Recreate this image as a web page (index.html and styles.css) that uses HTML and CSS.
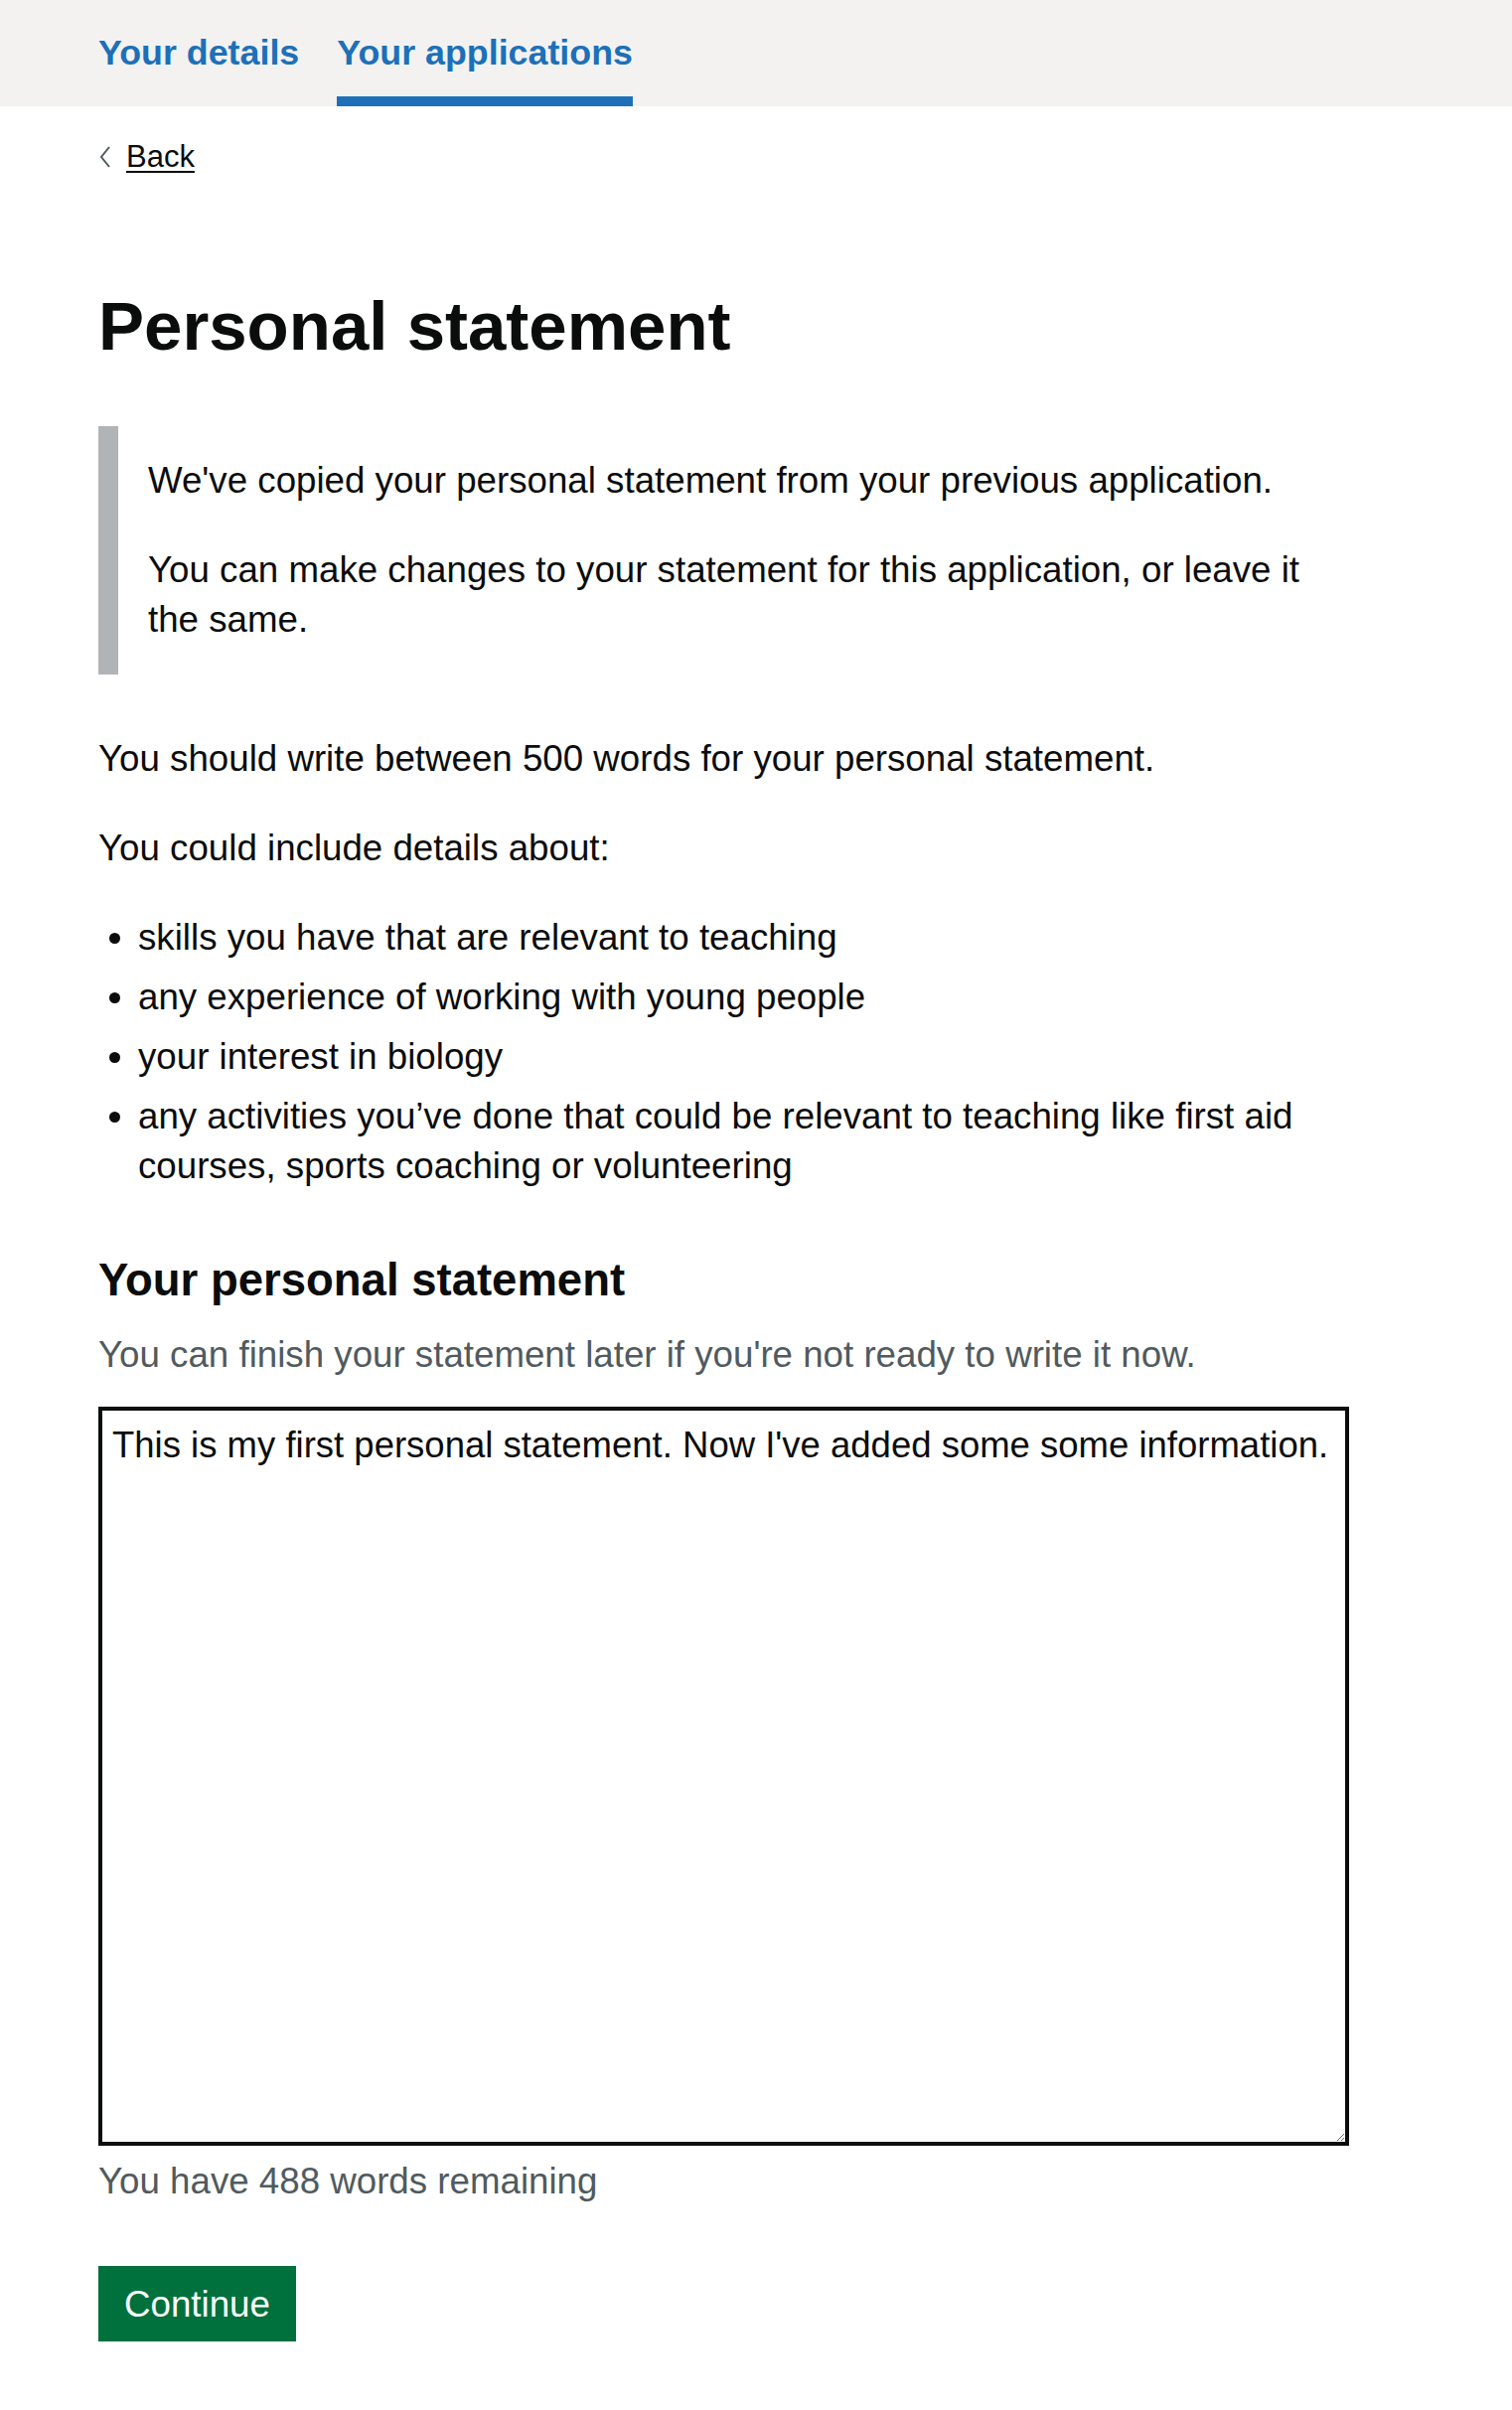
FILE: index.html
```html
<!DOCTYPE html>
<html lang="en">

<head>
    <meta charset="UTF-8">
    <meta name="viewport" content="width=device-width, initial-scale=1.0">
    <title>Personal statement</title>
    <link rel="stylesheet" href="styles.css">
</head>

<body>
    <header class="service-nav">
        <nav class="nav-list">
            <a class="nav-link" href="#">Your details</a>
            <a class="nav-link nav-link-active" href="#">Your applications</a>
        </nav>
    </header>

    <div class="page">
        <a class="back-link" href="#">
            <svg class="back-chevron" width="14" height="24" viewBox="0 0 14 24" aria-hidden="true">
                <polyline points="11,2 3,12 11,22" fill="none" stroke="#505a5f" stroke-width="2" />
            </svg>
            <span>Back</span>
        </a>

        <main class="main">
            <div class="column">
                <h1 class="heading-l">Personal statement</h1>

                <div class="inset-text">
                    <p>We've copied your personal statement from your previous application.</p>
                    <p>You can make changes to your statement for this application, or leave it the same.</p>
                </div>

                <p class="body">You should write between 500 words for your personal statement.</p>
                <p class="body">You could include details about:</p>

                <ul class="bullets">
                    <li>skills you have that are relevant to teaching</li>
                    <li>any experience of working with young people</li>
                    <li>your interest in biology</li>
                    <li>any activities you’ve done that could be relevant to teaching like first aid courses, sports coaching or volunteering</li>
                </ul>

                <div class="form-group">
                    <h2 class="label-wrapper">
                        <label class="label" for="statement">Your personal statement</label>
                    </h2>
                    <div class="hint">You can finish your statement later if you're not ready to write it now.</div>
                    <textarea class="textarea" id="statement" name="statement" rows="14">This is my first personal statement. Now I've added some some information.</textarea>
                    <div class="count">You have 488 words remaining</div>
                </div>

                <button class="button" type="submit">Continue</button>
            </div>
        </main>
    </div>
</body>

</html>
```

FILE: styles.css
```css
body {
    margin: 0;
    font-family: "Liberation Sans", Arial, sans-serif;
    font-size: 36.7px;
    line-height: 50px;
    color: #0b0c0c;
    background-color: #fff;
}

/* top navigation */
.service-nav {
    background-color: #f3f2f1;
    height: 107px;
}

.nav-list {
    display: flex;
    height: 100%;
    padding-left: 99px;
}

.nav-link {
    display: block;
    box-sizing: border-box;
    margin-right: 38px;
    padding-top: 33px;
    border-bottom: 10px solid transparent;
    font-size: 35.8px;
    line-height: 40px;
    font-weight: bold;
    color: #1d70b8;
    text-decoration: none;
}

.nav-link-active {
    border-bottom-color: #1d70b8;
}

/* page */
.page {
    padding: 0 99px;
}

.back-link {
    display: flex;
    align-items: center;
    width: fit-content;
    margin: 31px 0 30px;
    font-size: 31px;
    line-height: 40px;
    color: #0b0c0c;
    text-decoration: underline;
    text-decoration-thickness: 2px;
    text-underline-offset: 4px;
}

.back-chevron {
    margin-right: 14px;
}

.main {
    padding-top: 81px;
}

.column {
    max-width: 1259px;
}

.heading-l {
    margin: 0 0 60px;
    font-size: 69px;
    line-height: 80px;
    font-weight: bold;
}

.inset-text {
    margin: 60px 0;
    padding: 30px;
    border-left: 20px solid #b1b4b6;
}

.inset-text p {
    margin: 0 0 40px;
}

.inset-text p:last-child {
    margin-bottom: 0;
}

.body {
    margin: 0 0 40px;
}

.bullets {
    margin: 0 0 40px;
    padding-left: 40px;
    list-style-type: disc;
}

.bullets li {
    margin-bottom: 10px;
}

/* form */
.form-group {
    padding-top: 20px;
    margin-bottom: 60px;
}

.label-wrapper {
    margin: 0 0 20px;
    font-size: 45.5px;
    line-height: 60px;
    font-weight: bold;
}

.label {
    display: block;
}

.hint {
    margin-bottom: 27px;
    color: #505a5f;
}

.textarea {
    display: block;
    box-sizing: border-box;
    width: 100%;
    height: 744px;
    margin: 0;
    padding: 10px;
    border: 4px solid #0b0c0c;
    border-radius: 0;
    font-family: inherit;
    font-size: 36.5px;
    line-height: 50px;
    color: #0b0c0c;
    resize: vertical;
}

.count {
    margin-top: 11px;
    color: #505a5f;
}

.button {
    display: inline-block;
    margin: 0;
    padding: 16px 22px 14px;
    border: 4px solid transparent;
    border-radius: 0;
    background-color: #00703c;
    box-shadow: 0 4px 0 #002d18;
    color: #fff;
    font-family: inherit;
    font-size: 36.7px;
    line-height: 38px;
    cursor: pointer;
}

.button:hover {
    background-color: #005a30;
}
```
